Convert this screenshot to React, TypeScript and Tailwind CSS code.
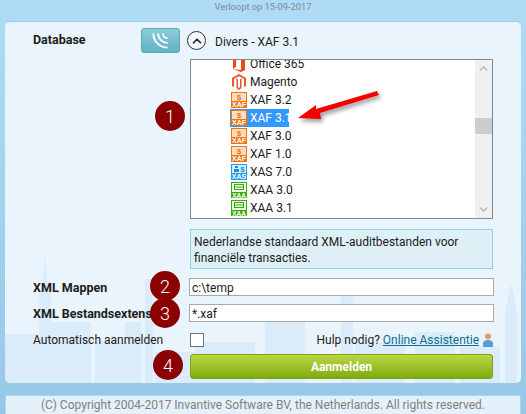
import { ChevronDown, ChevronUp } from "lucide-react";

const font = "font-['Roboto','Noto_Sans',sans-serif]";

const XafIcon = () => (
  <svg className="shrink-0" width="16" height="16" viewBox="0 0 16 16">
    <rect x="0.5" y="0.5" width="15" height="15" fill="#fddcc0" stroke="#ee7410" />
    <rect x="0" y="9" width="16" height="7" fill="#ee7410" />
    <text x="8" y="7.6" textAnchor="middle" fontSize="7.5" fontWeight="700" fill="#e8700c" fontFamily="Liberation Sans">$</text>
    <text x="8" y="15.2" textAnchor="middle" fontSize="7" fontWeight="700" fill="#fff" fontFamily="Liberation Sans">XAF</text>
  </svg>
);

const XasIcon = () => (
  <svg className="shrink-0" width="16" height="16" viewBox="0 0 16 16">
    <rect width="16" height="16" fill="#1f9eea" />
    <rect x="1" y="1" width="14" height="8" fill="#d8effb" />
    <rect x="4" y="2" width="3" height="2" fill="#1b8fd8" />
    <rect x="3" y="5" width="5" height="3" fill="#1b8fd8" />
    <text x="11.5" y="8" textAnchor="middle" fontSize="8" fontWeight="700" fill="#1b8fd8" fontFamily="Liberation Sans">$</text>
    <text x="8" y="15.2" textAnchor="middle" fontSize="7" fontWeight="700" fill="#fff" fontFamily="Liberation Sans">XAS</text>
  </svg>
);

const XaaIcon = () => (
  <svg className="shrink-0" width="16" height="16" viewBox="0 0 16 16">
    <rect x="0.5" y="0.5" width="15" height="15" fill="#f0fae8" stroke="#3aaa0a" />
    <rect x="0" y="10" width="16" height="6" fill="#3aaa0a" />
    <rect x="3.5" y="2.5" width="9" height="5" fill="none" stroke="#3aaa0a" />
    <path d="M3 5h10" stroke="#3aaa0a" />
    <text x="8" y="15.5" textAnchor="middle" fontSize="6.5" fontWeight="700" fill="#fff" fontFamily="Liberation Sans">XAA</text>
  </svg>
);

const OfficeIcon = () => (
  <svg className="shrink-0" width="16" height="16" viewBox="0 0 16 16">
    <path d="M2 3 L10 0 L14 2 V14 L10 16 L2 13 L10 14 V3 L5 4.5 V11 L2 13 Z" fill="#e8481c" />
  </svg>
);

const MagentoIcon = () => (
  <svg className="shrink-0" width="16" height="16" viewBox="0 0 16 16">
    <path d="M8 0 L15 4 V12 L13 13 V5 L8 2.2 L3 5 V13 L1 12 V4 Z" fill="#e9572b" />
    <path d="M7 5 L7 13 L8 14 L9 13 V5 L10.5 4.5 V14 L8 16 L5.5 14 V4.5 Z" fill="#e9572b" />
  </svg>
);

const listItems = [
  { label: "Office 365", icon: <OfficeIcon /> },
  { label: "Magento", icon: <MagentoIcon /> },
  { label: "XAF 3.2", icon: <XafIcon /> },
  { label: "XAF 3.1", icon: <XafIcon />, selected: true },
  { label: "XAF 3.0", icon: <XafIcon /> },
  { label: "XAF 1.0", icon: <XafIcon /> },
  { label: "XAS 7.0", icon: <XasIcon /> },
  { label: "XAA 3.0", icon: <XaaIcon /> },
  { label: "XAA 3.1", icon: <XaaIcon /> },
];

const Badge = ({ n, className }: { n: number; className: string }) => (
  <div
    className={`absolute flex h-[30px] w-[30px] items-center justify-center rounded-full bg-[#8b0000] text-[18px] font-light text-white ${className}`}
  >
    {n}
  </div>
);

// faint city skyline behind the form
const Skyline = () => (
  <svg className="absolute left-0 top-0" width="526" height="414" viewBox="0 0 526 414">
    <g fill="#8fc4e6" opacity="0.16">
      <path d="M34 385 V270 L38 262 L40 234 L42 262 L46 270 V385 Z" />
      <rect x="0" y="312" width="34" height="73" />
      <rect x="46" y="300" width="40" height="85" />
      <rect x="90" y="320" width="30" height="65" />
      <rect x="120" y="300" width="16" height="85" />
      <rect x="140" y="257" width="8" height="128" />
      <rect x="150" y="330" width="40" height="55" />
      <rect x="190" y="320" width="60" height="65" />
      <rect x="260" y="300" width="40" height="85" />
      <rect x="336" y="270" width="12" height="115" />
      <rect x="350" y="320" width="50" height="65" />
      <rect x="410" y="310" width="40" height="75" />
      <rect x="455" y="325" width="40" height="60" />
      <path d="M500 385 V290 L504 270 L506 262 L508 270 L512 290 V385 Z" />
    </g>
  </svg>
);

export default function App() {
  return (
    <div
      className={`relative flex h-[414px] w-[526px] flex-col overflow-hidden bg-gradient-to-b from-[#afdbf6] to-[#97c7e8] ${font} text-[12px] text-[#1c1c1c]`}
    >
      <div className="flex h-[21px] justify-center text-[9.3px] leading-[13px] text-[#7c8a96]">
        Verloopt op 15-09-2017
      </div>

      <div className="relative mx-[5px] h-[362px] overflow-hidden rounded-[5px] border-t border-[#92d2e6] bg-[#e9f4fd]">
        <Skyline />
        <div className="relative pl-[28px] pt-[6px]">
          <div className="flex h-[25px] items-center">
            <div className="w-[108px] text-[12.5px] font-bold">Database</div>
            <button className="flex h-[25px] w-[39px] items-center justify-center rounded-[3px] border border-[#5fa5b8] bg-gradient-to-b from-[#8accd9] to-[#63b1c8]">
              <svg width="39" height="25" viewBox="0 0 39 25" fill="none" stroke="#fff" strokeWidth="2">
                <path d="M22 5 A5 5 0 0 0 27 10" />
                <path d="M17 5 A10 10 0 0 0 27 15" />
                <path d="M12 5 A15 15 0 0 0 27 20" />
              </svg>
            </button>
            <div className="ml-[7px] flex h-[19px] w-[19px] items-center justify-center rounded-full border border-[#333] bg-white/40">
              <ChevronUp size={14} strokeWidth={3} color="#222" />
            </div>
            <span className="ml-[9px] translate-y-[1px]">Divers - XAF 3.1</span>
          </div>

          <div className="ml-[157px] w-[303px]">
            <div className="mt-[6px] flex h-[160px] border border-[#828790] bg-white">
              <div className="h-full flex-1 overflow-hidden pl-[39px]">
                <div className="-mt-[5px]">
                  {listItems.map((item) => (
                    <div
                      key={item.label}
                      className={`flex h-[18px] w-[59px] items-center gap-[3px] whitespace-nowrap pl-px ${
                        item.selected ? "bg-[#3399ff] text-white" : ""
                      }`}
                    >
                      {item.icon}
                      <span>{item.label}</span>
                    </div>
                  ))}
                </div>
              </div>
              <div className="flex w-[17px] flex-col bg-[#f0f0f0] text-[#a8a8a8]">
                <div className="flex h-[17px] items-center justify-center">
                  <ChevronUp size={13} />
                </div>
                <div className="mt-[41px] h-[16px] bg-[#cdcdcd]" />
                <div className="flex-1" />
                <div className="flex h-[17px] items-center justify-center">
                  <ChevronDown size={13} />
                </div>
              </div>
            </div>

            <div className="mt-[10px] h-[40px] border border-[#8ed2e4] bg-[#def0f6] px-[3px] pt-[4px] leading-[16px]">
              Nederlandse standaard XML-auditbestanden voor
              <br />
              financiële transacties.
            </div>
          </div>

          <div className="mt-[9px] flex h-[18px] items-center">
            <div className="w-[156px] translate-y-[1px] whitespace-nowrap text-[12.5px] font-bold">XML Mappen</div>
            <div className="flex h-[18px] w-[305px] items-center border border-[#a9a9a9] bg-white px-[2px] pt-[2px]">c:\temp</div>
          </div>
          <div className="mt-[8px] flex h-[18px] items-center">
            <div className="w-[156px] translate-y-[1px] whitespace-nowrap text-[12.5px] font-bold">XML Bestandsextensie</div>
            <div className="flex h-[18px] w-[305px] items-center border border-[#a9a9a9] bg-white px-[2px] pt-[2px]">*.xaf</div>
          </div>
          <div className="mt-[11px] flex h-[14px] items-center">
            <div className="w-[157px] whitespace-nowrap">Automatisch aanmelden</div>
            <div className="h-[14px] w-[14px] border border-[#707070] bg-white" />
            <div className="ml-auto mr-[28px] flex items-center whitespace-nowrap">
              <span>Hulp nodig?</span>
              <a className="ml-[3px] text-[#0f6d92] underline">Online Assistentie</a>
              <svg className="ml-[4px]" width="10" height="14" viewBox="0 0 10 14">
                <circle cx="5" cy="3.5" r="3" fill="#d9a06b" />
                <path d="M0 14 V10 Q1 7 5 7 Q9 7 10 10 V14 Z" fill="#5b9bd0" />
              </svg>
            </div>
          </div>
          <button className="ml-[157px] mt-[7px] h-[25px] w-[303px] rounded-[3px] border border-[#7ea30f] bg-gradient-to-b from-[#bad743] to-[#80ab08] text-[12px] font-bold text-white">
            Aanmelden
          </button>
        </div>
      </div>

      <div className="mx-[5px] mt-[12px] flex h-[19px] items-center justify-center border border-b-0 border-[#a6d8ec] bg-[#e4f1fb] text-[12px] text-[#808080]">
        (C) Copyright 2004-2017 Invantive Software BV, the Netherlands. All rights reserved.
      </div>

      {/* annotations drawn on top of the screenshot */}
      <Badge n={1} className="left-[155px] top-[101px]" />
      <Badge n={2} className="left-[150px] top-[271px]" />
      <Badge n={3} className="left-[150px] top-[298px]" />
      <Badge n={4} className="left-[153px] top-[350px]" />
      <svg className="absolute left-0 top-0 drop-shadow-[2px_3px_2px_rgba(0,0,0,0.4)]" width="526" height="414" viewBox="0 0 526 414">
        <path d="M298 118 L316 105 L316 109 L377 91 L379 95 L320 113 L321 119 Z" fill="#f40000" />
      </svg>
    </div>
  );
}
